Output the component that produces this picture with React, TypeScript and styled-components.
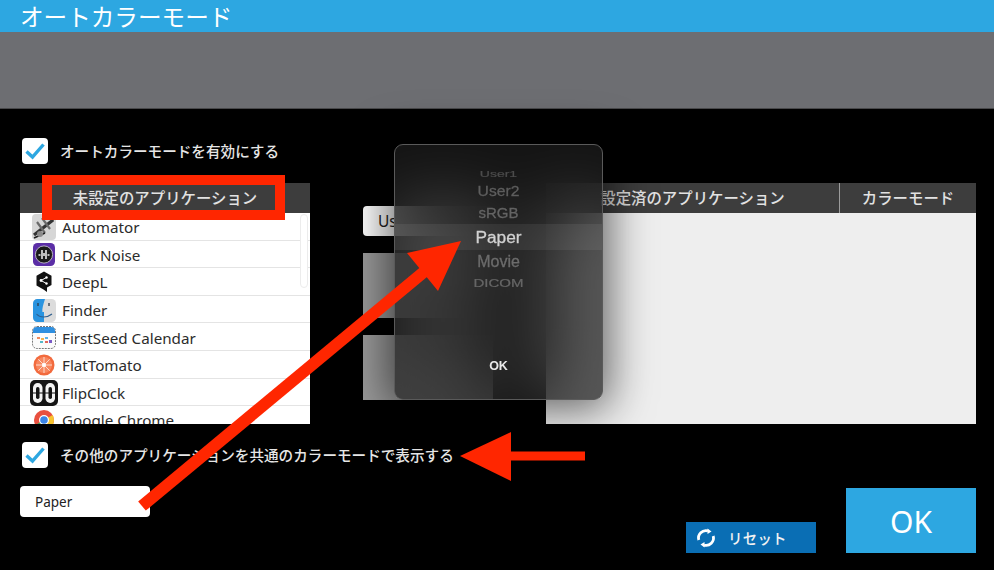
import React from 'react'
import styled, { createGlobalStyle } from 'styled-components'

const GlobalStyle = createGlobalStyle`
  html, body {
    margin: 0;
    padding: 0;
    background: #000;
  }
  * {
    box-sizing: border-box;
  }
`

const JP = `"Noto Sans CJK JP", "Noto Sans", sans-serif`

const Page = styled.div`
  position: relative;
  width: 994px;
  height: 570px;
  display: flex;
  flex-direction: column;
  background: #000;
  overflow: hidden;
  font-family: ${JP};
`

const TitleBar = styled.div`
  height: 32px;
  padding-left: 20px;
  background: #2da7e1;
  color: #fff;
  font-size: 23.6px;
  line-height: 32px;
  white-space: nowrap;
`

const Band = styled.div`
  height: 77px;
  background: #6d6e72;
  border-bottom: 1px solid #48484a;
`

const Content = styled.div`
  flex: 1;
  padding: 29px 18px 0 20px;
  display: flex;
  flex-direction: column;
`

const CheckRow = styled.div`
  height: 26px;
  margin-left: 2px;
  display: flex;
  align-items: center;
  gap: 12px;
  color: #e6e6e6;
  font-size: 14.6px;
  font-weight: 500;
  white-space: nowrap;
`

const CheckLabel = styled.span`
  margin-top: -1px;
`

const CheckBox = styled.span`
  width: 26px;
  height: 26px;
  border-radius: 4px;
  background: #fff;
  display: flex;
  align-items: center;
  justify-content: center;
`

const Panels = styled.div`
  margin-top: 19px;
  height: 241px;
  display: flex;
`

const ListPanel = styled.div`
  position: relative;
  width: 290px;
  height: 100%;
  background: #fff;
  overflow: hidden;
`

const HeaderCell = styled.div<{ $width?: number }>`
  height: 30px;
  ${({ $width }) => ($width ? `width: ${$width}px;` : 'width: 100%;')}
  background: #3d3d3d;
  color: #e2e2e2;
  font-size: 15.4px;
  font-weight: 500;
  line-height: 29px;
  text-align: center;
  white-space: nowrap;
`

const AppRow = styled.div`
  height: 27.6px;
  padding: 2px 0 0 12px;
  display: flex;
  align-items: center;
  border-bottom: 1px solid #e4e4e4;
  color: #2c2c2c;
  font-family: "Noto Sans", sans-serif;
  font-size: 15.2px;
  white-space: nowrap;
`

const AppIcon = styled.span`
  position: relative;
  width: 24px;
  height: 24px;
  margin-right: 6px;
  flex-shrink: 0;
  display: flex;
  align-items: center;
  justify-content: center;

  svg {
    flex-shrink: 0;
    display: block;
  }
`

const ScrollTrack = styled.div`
  position: absolute;
  top: 31px;
  right: 2px;
  width: 8px;
  height: 74px;
  border: 1px solid #ececec;
  border-radius: 4px;
  background: #fff;
`

const MiddleColumn = styled.div`
  width: 130px;
  margin-left: 53px;
  padding-top: 23px;
  display: flex;
  flex-direction: column;
`

const UserButton = styled.div`
  height: 30px;
  padding-left: 15px;
  border-radius: 4px;
  background: #fff;
  color: #222;
  font-family: "Noto Sans", sans-serif;
  font-size: 15.5px;
  line-height: 31px;
`

const UserLabel = styled.span`
  display: block;
  width: 16px;
  overflow: hidden;
  white-space: nowrap;
`

const GrayBox = styled.div<{ $gap: number }>`
  height: 65px;
  margin-top: ${({ $gap }) => $gap}px;
  background: #9a9a9a;
`

const TablePanel = styled.div`
  width: 430px;
  height: 100%;
  margin-left: auto;
  background: #eeeeee;
`

const TableHead = styled.div`
  display: flex;
`

const ColumnDivider = styled.div`
  width: 1px;
  height: 30px;
  background: #9c9c9c;
`

const BottomArea = styled.div`
  margin-top: 18px;
  height: 111px;
  display: flex;
  justify-content: space-between;
`

const BottomLeft = styled.div`
  display: flex;
  flex-direction: column;
`

const ModeSelect = styled.div`
  width: 130px;
  height: 31px;
  margin-top: 18px;
  padding-left: 15px;
  border-radius: 4px;
  background: #fff;
  color: #222;
  font-family: "Noto Sans", sans-serif;
  font-size: 13.5px;
  line-height: 32px;
`

const BottomButtons = styled.div`
  display: flex;
  align-items: flex-end;
  gap: 30px;
`

const ResetButton = styled.div`
  width: 130px;
  height: 31px;
  padding-left: 10px;
  display: flex;
  align-items: center;
  gap: 12px;
  background: #0a6eb4;
  color: #f2f2f2;
  font-size: 14.4px;
  font-weight: 500;
  letter-spacing: 0.3px;
`

const OkButton = styled.div`
  width: 130px;
  height: 65px;
  background: #2da7e1;
  color: #fff;
  font-family: "Noto Sans", sans-serif;
  font-size: 30px;
  line-height: 67px;
  text-align: center;
`

const PickerDialog = styled.div`
  position: absolute;
  left: 394px;
  top: 144px;
  width: 209px;
  height: 256px;
  padding-top: 23px;
  display: flex;
  flex-direction: column;
  align-items: center;
  border: 1px solid #5a5a5a;
  border-radius: 9px;
  background: rgba(28, 28, 28, 0.72);
  backdrop-filter: blur(34px);
  box-shadow: 0 3px 44px 6px rgba(0, 0, 0, 0.6);
  font-family: "Liberation Sans", Arial, sans-serif;
`

const WheelItem = styled.div<{ $height: number; $size: number; $squash: number; $color: string }>`
  width: 100%;
  height: ${({ $height }) => $height}px;
  color: ${({ $color }) => $color};
  font-size: ${({ $size }) => $size}px;
  line-height: ${({ $height }) => $height}px;
  text-align: center;
  -webkit-text-stroke: 0.3px currentColor;
  transform: scaleY(${({ $squash }) => $squash});
`

const SelectedItem = styled.div`
  width: 100%;
  height: 26px;
  background: rgba(255, 255, 255, 0.07);
  color: #d2d2d2;
  font-size: 17.3px;
  line-height: 27px;
  text-align: center;
  -webkit-text-stroke: 0.3px currentColor;
`

const DialogOk = styled.div`
  margin-top: auto;
  margin-bottom: 26px;
  color: #e8e8e8;
  font-size: 12.5px;
  font-weight: 700;
`

const RedFrame = styled.div`
  position: absolute;
  left: 42px;
  top: 175px;
  width: 243px;
  height: 45px;
  border: 10px solid #ff2600;
`

const ArrowLayer = styled.svg`
  position: absolute;
  left: 0;
  top: 0;
  pointer-events: none;
`

const Check = () => (
  <svg width="22" height="18" viewBox="0 0 22 18">
    <path d="M2.5 9.5 L8.5 15 L19.5 2.5" fill="none" stroke="#2da7e1" strokeWidth="3.4" />
  </svg>
)

const AutomatorIcon = () => (
  <svg width="24" height="26" viewBox="0 0 24 26">
    <rect x="0" y="0" width="24" height="26" rx="4" fill="#d6d6d6" />
    <path d="M2 21 L21 6" stroke="#333" strokeWidth="3.2" />
    <path d="M5 8 L13 19 M10 4 L18 15" stroke="#6a6a6a" strokeWidth="2.2" />
    <path d="M2 24 L13 19 M15 2 L22 6" stroke="#1f1f1f" strokeWidth="1.6" />
    <circle cx="8" cy="20" r="3" fill="#8b8b8b" />
  </svg>
)

const DarkNoiseIcon = () => (
  <svg width="22" height="23" viewBox="0 0 22 23">
    <rect x="0" y="0" width="22" height="23" rx="4.5" fill="#5b2ea6" />
    <circle cx="11" cy="11.5" r="8.6" fill="#1a1a1a" stroke="#cfcfcf" strokeWidth="0.8" />
    <path d="M5.5 12 H7.5 M9 7 V16 M11 10 V13 M13 7 V16 M14.5 12 H16.5" stroke="#f2f2f2" strokeWidth="1.5" />
  </svg>
)

const DeepLIcon = () => (
  <svg width="18" height="22" viewBox="0 0 18 22">
    <path d="M9 0.5 L16.5 4.8 V14 L12 16.6 V21 L8.5 18.6 L1.5 14.5 V4.8 Z" fill="#111" />
    <circle cx="6" cy="9.5" r="1.4" fill="#fff" />
    <circle cx="11.5" cy="6.5" r="1.2" fill="#fff" />
    <circle cx="11.5" cy="12.5" r="1.2" fill="#fff" />
    <path d="M6 9.5 L11.5 6.5 M6 9.5 L11.5 12.5" stroke="#fff" strokeWidth="1" />
  </svg>
)

const FinderIcon = () => (
  <svg width="23" height="23" viewBox="0 0 23 23">
    <rect x="0" y="0" width="23" height="23" rx="4.5" fill="#dcdcdc" />
    <path d="M4.5 0 H12 C10 6 9 10 9.4 13 H11 V23 H4.5 A4.5 4.5 0 0 1 0 18.5 V4.5 A4.5 4.5 0 0 1 4.5 0 Z" fill="#2a94e0" />
    <path d="M5 4 V7 M16 4 V7" stroke="#2f3a4a" strokeWidth="1.3" />
    <path d="M3.5 15 C7 19 14 19 19 15" fill="none" stroke="#2f5f8e" strokeWidth="1.1" />
  </svg>
)

const CalendarIcon = () => (
  <svg width="24" height="23" viewBox="0 0 24 23">
    <rect x="0.5" y="0.5" width="23" height="22" rx="4.5" fill="#fbfbfb" stroke="#555" strokeWidth="0.8" strokeDasharray="2 1" />
    <path d="M1 5 A4 4 0 0 1 5 1 H19 A4 4 0 0 1 23 5 V7 H1 Z" fill="#2e8fe0" />
    <rect x="5" y="11" width="3" height="2" fill="#f08a5d" />
    <rect x="9" y="12" width="3" height="2" fill="#f3b34c" />
    <rect x="13" y="11" width="3" height="2" fill="#5db2e8" />
    <rect x="8" y="15" width="3" height="2" fill="#53b8c9" />
    <rect x="13" y="15" width="3" height="2" fill="#e2675a" />
    <rect x="17" y="14" width="3" height="3" fill="#7a5bc7" />
  </svg>
)

const TomatoIcon = () => (
  <svg width="22" height="22" viewBox="0 0 22 22">
    <circle cx="11" cy="11" r="10.5" fill="#f26a3d" />
    <circle cx="11" cy="11" r="8" fill="#f8875f" />
    <path d="M11 3 V19 M3 11 H19 M5.3 5.3 L16.7 16.7 M16.7 5.3 L5.3 16.7" stroke="#fde3d8" strokeWidth="0.9" />
    <circle cx="11" cy="11" r="2" fill="#fff" />
  </svg>
)

const FlipClockIcon = () => (
  <svg width="28" height="26" viewBox="0 0 28 26">
    <rect x="0" y="0" width="28" height="26" rx="5" fill="#151515" />
    <rect x="3" y="3" width="9.5" height="20" rx="4.7" fill="#f4f4f4" />
    <rect x="15.5" y="3" width="9.5" height="20" rx="4.7" fill="#f4f4f4" />
    <rect x="6" y="7" width="3.5" height="12" rx="1.7" fill="#151515" />
    <rect x="18.5" y="7" width="3.5" height="12" rx="1.7" fill="#151515" />
    <path d="M2 13 H26" stroke="#151515" strokeWidth="1" />
  </svg>
)

const ChromeIcon = () => (
  <svg width="20" height="20" viewBox="0 0 20 20">
    <circle cx="10" cy="10" r="10" fill="#e8503f" />
    <path d="M10 10 L1.4 15 A10 10 0 0 0 10 20 Z" fill="#3aa757" />
    <path d="M10 10 L18.6 5 A10 10 0 0 1 10 20 Z" fill="#f7c42f" />
    <circle cx="10" cy="10" r="5" fill="#fff" />
    <circle cx="10" cy="10" r="3.8" fill="#3c85e6" />
  </svg>
)

const ResetIcon = () => (
  <svg width="20" height="20" viewBox="0 0 20 20">
    <path d="M2.8 12 A7.4 7.4 0 0 1 12 2.9" fill="none" stroke="#fff" strokeWidth="2.8" />
    <path d="M17.2 8 A7.4 7.4 0 0 1 8 17.1" fill="none" stroke="#fff" strokeWidth="2.8" />
    <path d="M11.5 0.5 L15.5 3.6 L11.5 6 Z" fill="#fff" />
    <path d="M8.5 14 L4.5 16.4 L8.5 19.5 Z" fill="#fff" />
  </svg>
)

const apps = [
  { name: 'Automator', icon: <AutomatorIcon /> },
  { name: 'Dark Noise', icon: <DarkNoiseIcon /> },
  { name: 'DeepL', icon: <DeepLIcon /> },
  { name: 'Finder', icon: <FinderIcon /> },
  { name: 'FirstSeed Calendar', icon: <CalendarIcon /> },
  { name: 'FlatTomato', icon: <TomatoIcon /> },
  { name: 'FlipClock', icon: <FlipClockIcon /> },
  { name: 'Google Chrome', icon: <ChromeIcon /> },
]

const App: React.FC = () => {
  return (
    <Page>
      <GlobalStyle />
      <TitleBar>オートカラーモード</TitleBar>
      <Band />
      <Content>
        <CheckRow>
          <CheckBox><Check /></CheckBox>
          <CheckLabel>オートカラーモードを有効にする</CheckLabel>
        </CheckRow>
        <Panels>
          <ListPanel>
            <HeaderCell>未設定のアプリケーション</HeaderCell>
            {apps.map((app) => (
              <AppRow key={app.name}>
                <AppIcon>{app.icon}</AppIcon>
                {app.name}
              </AppRow>
            ))}
            <ScrollTrack />
          </ListPanel>
          <MiddleColumn>
            <UserButton><UserLabel>User1</UserLabel></UserButton>
            <GrayBox $gap={17} />
            <GrayBox $gap={17} />
          </MiddleColumn>
          <TablePanel>
            <TableHead>
              <HeaderCell $width={293}>設定済のアプリケーション</HeaderCell>
              <ColumnDivider />
              <HeaderCell $width={136}>カラーモード</HeaderCell>
            </TableHead>
          </TablePanel>
        </Panels>
        <BottomArea>
          <BottomLeft>
            <CheckRow>
              <CheckBox><Check /></CheckBox>
              <CheckLabel>その他のアプリケーションを共通のカラーモードで表示する</CheckLabel>
            </CheckRow>
            <ModeSelect>Paper</ModeSelect>
          </BottomLeft>
          <BottomButtons>
            <ResetButton>
              <ResetIcon />
              リセット
            </ResetButton>
            <OkButton>OK</OkButton>
          </BottomButtons>
        </BottomArea>
      </Content>
      <PickerDialog>
        <WheelItem $height={13} $size={14} $squash={0.6} $color="#4c4c4c">User1</WheelItem>
        <WheelItem $height={20} $size={15.7} $squash={0.9} $color="#5e5e5e">User2</WheelItem>
        <WheelItem $height={23} $size={15} $squash={1} $color="#646464">sRGB</WheelItem>
        <SelectedItem>Paper</SelectedItem>
        <WheelItem $height={23} $size={16} $squash={1} $color="#6c6c6c">Movie</WheelItem>
        <WheelItem $height={20} $size={15} $squash={0.78} $color="#666">DICOM</WheelItem>
        <DialogOk>OK</DialogOk>
      </PickerDialog>
      <RedFrame />
      <ArrowLayer width="994" height="570" viewBox="0 0 994 570">
        <path d="M142 506 L425 271" stroke="#ff2600" strokeWidth="12" />
        <polygon points="461,241 407,253 438,291" fill="#ff2600" />
        <path d="M505 456 H585" stroke="#ff2600" strokeWidth="9" />
        <polygon points="460,456 511,432 511,481" fill="#ff2600" />
      </ArrowLayer>
    </Page>
  )
}

export default App
